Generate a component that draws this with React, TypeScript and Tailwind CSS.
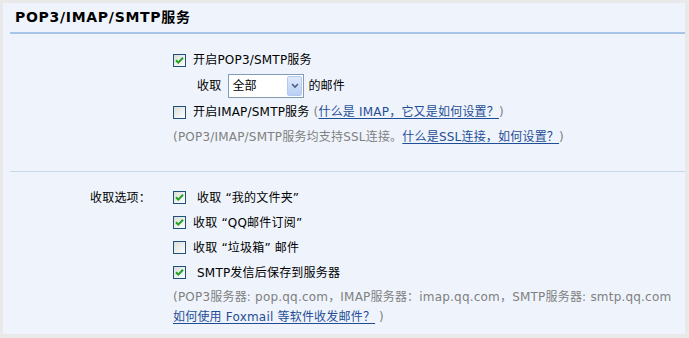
import type { ReactNode } from 'react'

const font = { fontFamily: '"DejaVu Sans", "Noto Sans CJK SC", sans-serif' }

function Box({ checked }: { checked?: boolean }) {
  return (
    <span className="inline-flex h-[13px] w-[13px] shrink-0 items-center justify-center border border-[#1c5180] bg-gradient-to-br from-[#dcdcd6] to-white">
      {checked && (
        <svg width="9" height="9" viewBox="0 0 9 9">
          <path d="M1 4.2 L3.3 6.6 L8 1.8" fill="none" stroke="#21a121" strokeWidth="2" />
        </svg>
      )}
    </span>
  )
}

function Row({ checked, children, h = 'h-[26px]' }: { checked?: boolean; children: ReactNode; h?: string }) {
  return (
    <div className={`flex items-center ${h}`}>
      <Box checked={checked} />
      <span className="ml-[7px]">{children}</span>
    </div>
  )
}

function Link({ children }: { children: ReactNode }) {
  return <a className="text-[#1f4e96] underline underline-offset-2">{children}</a>
}

export default function App() {
  return (
    <div className="h-[338px] w-[689px] bg-[#e9e9e9] pl-[3px] pr-[4px] pt-[3px]" style={font}>
      <div className="h-[331px] bg-[#eff4fc] text-[12px] tracking-[0.2px] text-black">
        <div className="flex h-[29px] items-center pl-[12px] text-[14px] font-bold tracking-[0.7px]">POP3/IMAP/SMTP服务</div>
        <div className="ml-[7px] h-[2px] bg-[#a8c5e8]" />

        <div className="pl-[170px] pt-[13px]">
          <Row checked>开启POP3/SMTP服务</Row>
          <div className="flex h-[26px] items-center pl-[24px]">
            <span>收取</span>
            <div className="ml-[7px] flex h-[24px] w-[76px] items-center border border-[#7f9db9] bg-white">
              <span className="flex-1 pl-[3px]">全部</span>
              <span className="mr-[1px] flex h-[20px] w-[15px] items-center justify-center rounded-[2px] border border-[#b4c8f0] bg-gradient-to-b from-[#e0eafc] to-[#b8cff5]">
                <svg width="8" height="6" viewBox="0 0 8 6">
                  <path d="M1 1 L4 4 L7 1" fill="none" stroke="#4d6185" strokeWidth="1.6" />
                </svg>
              </span>
            </div>
            <span className="ml-[4px]">的邮件</span>
          </div>
          <Row>
            开启IMAP/SMTP服务 <span className="text-[#808080]">(</span>
            <Link>什么是 IMAP，它又是如何设置？</Link>
            <span className="text-[#808080]">)</span>
          </Row>
          <div className="flex h-[24px] items-center text-[#808080]">
            (POP3/IMAP/SMTP服务均支持SSL连接。<Link>什么是SSL连接，如何设置？</Link>)
          </div>
        </div>

        <div className="ml-[7px] mt-[22px] h-px bg-[#c8d7e6]" />

        <div className="flex pl-[87px] pt-[13px]">
          <div className="flex h-[25px] w-[83px] items-center">收取选项：</div>
          <div>
            <Row checked h="h-[25px]">&nbsp;收取 “我的文件夹”</Row>
            <Row checked h="h-[25px]">收取 “QQ邮件订阅”</Row>
            <Row h="h-[25px]">收取 “垃圾箱” 邮件</Row>
            <Row checked h="h-[25px]">&nbsp;SMTP发信后保存到服务器</Row>
            <div className="pt-[2px] leading-[20px] text-[#808080]">
              <div>(POP3服务器: pop.qq.com，IMAP服务器：imap.qq.com，SMTP服务器: smtp.qq.com</div>
              <div>
                <Link>如何使用 Foxmail 等软件收发邮件？</Link> )
              </div>
            </div>
          </div>
        </div>
      </div>
    </div>
  )
}
